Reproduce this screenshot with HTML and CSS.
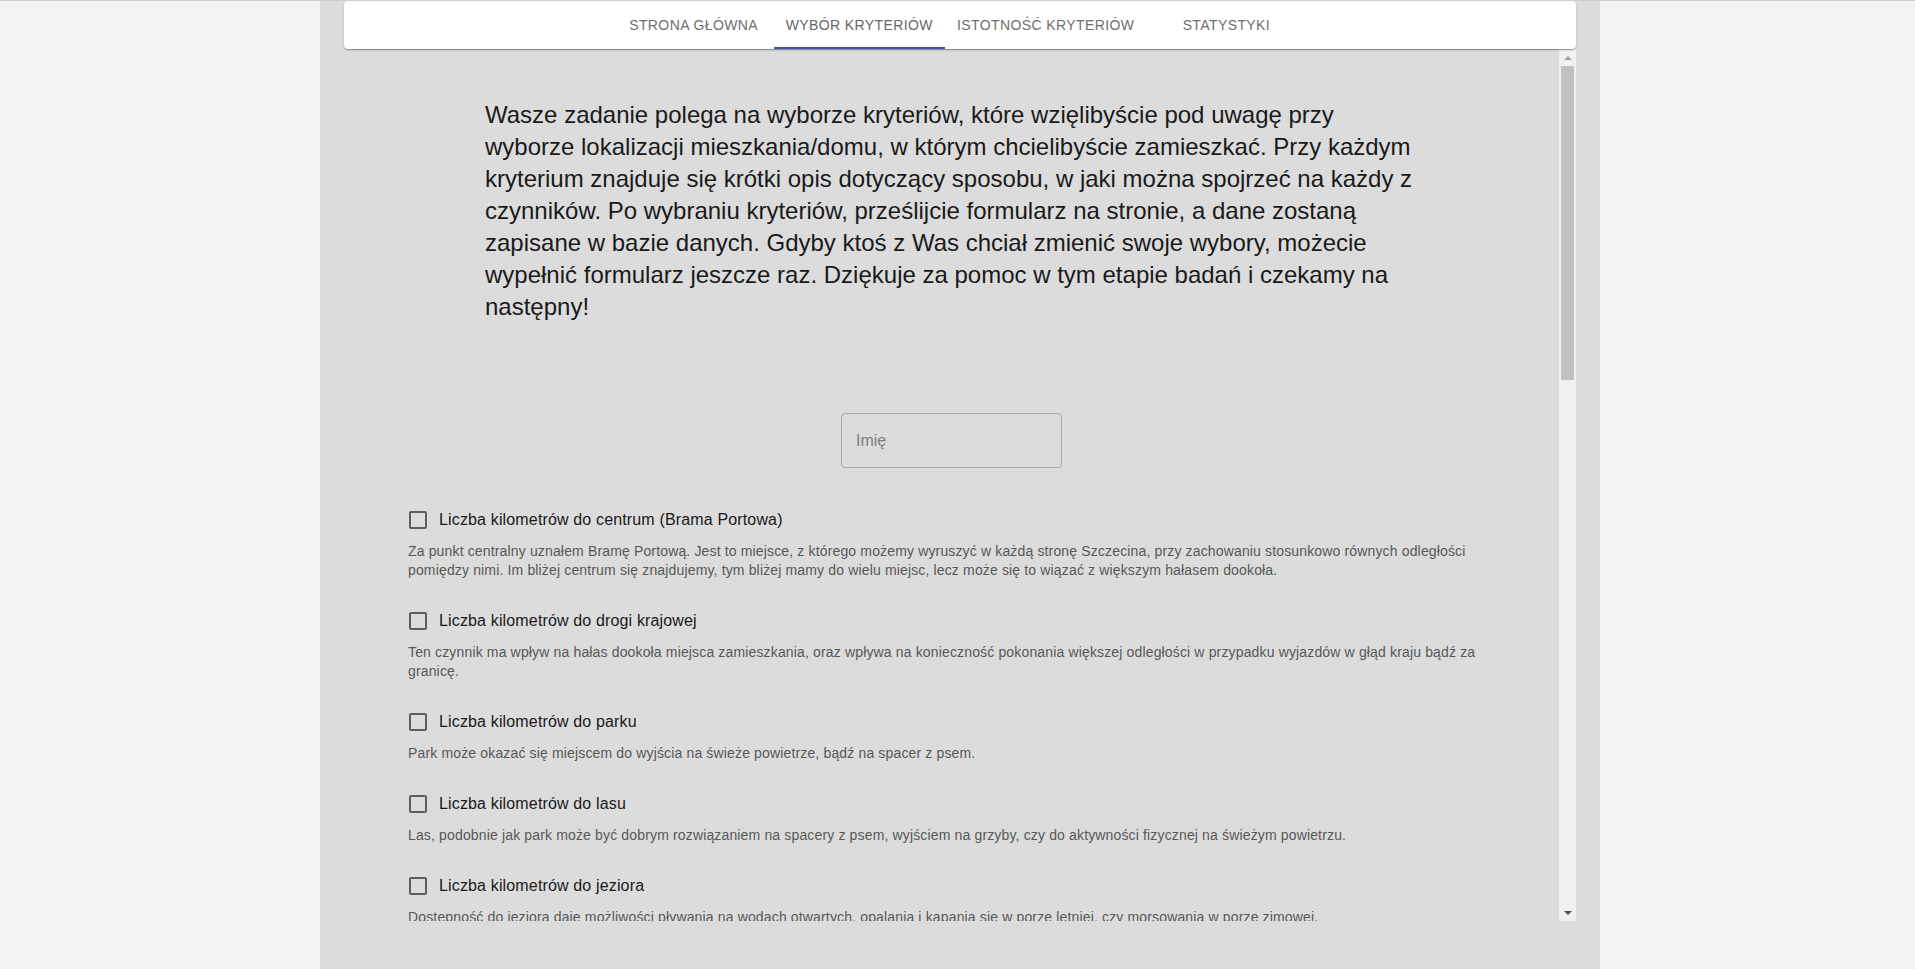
FILE: index.html
```html
<!DOCTYPE html>
<html lang="pl">
<head>
<meta charset="utf-8">
<title>Wybór kryteriów</title>
<link rel="stylesheet" href="styles.css">
</head>
<body>
<div class="page">
  <header class="appbar">
    <nav class="tabs">
      <a class="tab">Strona główna</a>
      <a class="tab tab-active">Wybór kryteriów</a>
      <a class="tab">Istotność kryteriów</a>
      <a class="tab">Statystyki</a>
    </nav>
  </header>
  <div class="viewport">
    <main class="scroller">
      <div class="content">
        <p class="intro">Wasze zadanie polega na wyborze kryteriów, które wzięlibyście pod uwagę przy wyborze lokalizacji mieszkania/domu, w którym chcielibyście zamieszkać. Przy każdym kryterium znajduje się krótki opis dotyczący sposobu, w jaki można spojrzeć na każdy z czynników. Po wybraniu kryteriów, prześlijcie formularz na stronie, a dane zostaną zapisane w bazie danych. Gdyby ktoś z Was chciał zmienić swoje wybory, możecie wypełnić formularz jeszcze raz. Dziękuje za pomoc w tym etapie badań i czekamy na następny!</p>
        <div class="name-field">
          <input class="name-input" type="text" placeholder="Imię">
        </div>
        <div class="criteria">
          <div class="criterion">
            <label class="check-row">
              <span class="check-btn"><svg class="check-icon" viewBox="0 0 24 24"><path d="M19 5v14H5V5h14m0-2H5c-1.11 0-2 .9-2 2v14c0 1.1.89 2 2 2h14c1.1 0 2-.9 2-2V5c0-1.1-.9-2-2-2z"/></svg></span>
              <span class="check-label">Liczba kilometrów do centrum (Brama Portowa)</span>
            </label>
            <p class="criterion-desc">Za punkt centralny uznałem Bramę Portową. Jest to miejsce, z którego możemy wyruszyć w każdą stronę Szczecina, przy zachowaniu stosunkowo równych odległości pomiędzy nimi. Im bliżej centrum się znajdujemy, tym bliżej mamy do wielu miejsc, lecz może się to wiązać z większym hałasem dookoła.</p>
          </div>
          <div class="criterion">
            <label class="check-row">
              <span class="check-btn"><svg class="check-icon" viewBox="0 0 24 24"><path d="M19 5v14H5V5h14m0-2H5c-1.11 0-2 .9-2 2v14c0 1.1.89 2 2 2h14c1.1 0 2-.9 2-2V5c0-1.1-.9-2-2-2z"/></svg></span>
              <span class="check-label">Liczba kilometrów do drogi krajowej</span>
            </label>
            <p class="criterion-desc">Ten czynnik ma wpływ na hałas dookoła miejsca zamieszkania, oraz wpływa na konieczność pokonania większej odległości w przypadku wyjazdów w głąd kraju bądź za granicę.</p>
          </div>
          <div class="criterion">
            <label class="check-row">
              <span class="check-btn"><svg class="check-icon" viewBox="0 0 24 24"><path d="M19 5v14H5V5h14m0-2H5c-1.11 0-2 .9-2 2v14c0 1.1.89 2 2 2h14c1.1 0 2-.9 2-2V5c0-1.1-.9-2-2-2z"/></svg></span>
              <span class="check-label">Liczba kilometrów do parku</span>
            </label>
            <p class="criterion-desc">Park może okazać się miejscem do wyjścia na świeże powietrze, bądź na spacer z psem.</p>
          </div>
          <div class="criterion">
            <label class="check-row">
              <span class="check-btn"><svg class="check-icon" viewBox="0 0 24 24"><path d="M19 5v14H5V5h14m0-2H5c-1.11 0-2 .9-2 2v14c0 1.1.89 2 2 2h14c1.1 0 2-.9 2-2V5c0-1.1-.9-2-2-2z"/></svg></span>
              <span class="check-label">Liczba kilometrów do lasu</span>
            </label>
            <p class="criterion-desc">Las, podobnie jak park może być dobrym rozwiązaniem na spacery z psem, wyjściem na grzyby, czy do aktywności fizycznej na świeżym powietrzu.</p>
          </div>
          <div class="criterion">
            <label class="check-row">
              <span class="check-btn"><svg class="check-icon" viewBox="0 0 24 24"><path d="M19 5v14H5V5h14m0-2H5c-1.11 0-2 .9-2 2v14c0 1.1.89 2 2 2h14c1.1 0 2-.9 2-2V5c0-1.1-.9-2-2-2z"/></svg></span>
              <span class="check-label">Liczba kilometrów do jeziora</span>
            </label>
            <p class="criterion-desc">Dostępność do jeziora daje możliwości pływania na wodach otwartych, opalania i kąpania się w porze letniej, czy morsowania w porze zimowej.</p>
          </div>
        </div>
      </div>
    </main>
    <div class="scrollbar" aria-hidden="true">
      <span class="sb-btn sb-up"></span>
      <span class="sb-track"><span class="sb-thumb"></span></span>
      <span class="sb-btn sb-down"></span>
    </div>
  </div>
</div>
</body>
</html>
```
FILE: styles.css
```css
html, body {
  margin: 0;
  height: 100%;
  overflow: hidden;
}
body {
  background: #f2f2f2;
  border-top: 1px solid #cfcfcf;
  box-sizing: border-box;
  font-family: "Liberation Sans", Arial, sans-serif;
}
.page {
  width: 1280px;
  height: 100%;
  margin-left: 320px;
  padding: 0 24px;
  box-sizing: border-box;
  background: #dcdcdc;
  display: flex;
  flex-direction: column;
}
.appbar {
  flex: none;
  height: 48px;
  background: #fff;
  border-radius: 4px;
  box-shadow: 0 2px 1px -1px rgba(0,0,0,0.2), 0 1px 1px 0 rgba(0,0,0,0.14), 0 1px 3px 0 rgba(0,0,0,0.12);
  display: flex;
  justify-content: center;
  position: relative;
  z-index: 1;
}
.tabs {
  display: flex;
}
.tab {
  position: relative;
  min-width: 160px;
  height: 48px;
  padding: 0 12px;
  box-sizing: border-box;
  display: flex;
  align-items: center;
  justify-content: center;
  font-size: 14px;
  letter-spacing: 0.4px;
  text-transform: uppercase;
  color: #6e6e6e;
  cursor: pointer;
}
.tab-active {
  color: #666;
}
.tab-active::after {
  content: "";
  position: absolute;
  left: 0;
  right: 0;
  bottom: 0;
  height: 2px;
  background: #3f51b5;
}
.viewport {
  flex: none;
  height: 90vh;
  display: flex;
}
.scroller {
  flex: 1;
  min-width: 0;
  overflow: hidden;
}
.scrollbar {
  flex: none;
  width: 17px;
  background: #f1f1f1;
  display: flex;
  flex-direction: column;
}
.sb-btn {
  flex: none;
  height: 17px;
  display: flex;
  align-items: center;
  justify-content: center;
}
.sb-up::before {
  content: "";
  border-left: 4px solid transparent;
  border-right: 4px solid transparent;
  border-bottom: 4px solid #a3a3a3;
}
.sb-down::before {
  content: "";
  border-left: 4px solid transparent;
  border-right: 4px solid transparent;
  border-top: 4px solid #505050;
}
.sb-track {
  flex: 1;
  padding: 0 2px;
}
.sb-thumb {
  display: block;
  height: 314px;
  background: #c1c1c1;
}
.content {
  padding-top: 50px;
  display: flex;
  flex-direction: column;
  align-items: center;
}
.intro {
  width: 933px;
  margin: 0;
  font-size: 24px;
  line-height: 32px;
  color: #1a1a1a;
}
.name-field {
  margin-top: 90px;
}
.name-input {
  width: 221px;
  height: 55px;
  box-sizing: border-box;
  padding: 0 14px;
  border: 1px solid #a9a9a9;
  border-radius: 4px;
  background: transparent;
  font-family: "Liberation Sans", Arial, sans-serif;
  font-size: 16px;
  color: #1a1a1a;
  outline: none;
}
.name-input::placeholder {
  color: #7c7c7c;
}
.criteria {
  width: 1087px;
  margin-top: 31px;
}
.criterion {
  margin-bottom: 20px;
}
.check-row {
  display: flex;
  align-items: center;
  height: 42px;
  margin-left: -11px;
  cursor: pointer;
}
.check-btn {
  padding: 9px;
  display: flex;
}
.check-icon {
  width: 24px;
  height: 24px;
  fill: #5e5e5e;
}
.check-label {
  font-size: 16px;
  letter-spacing: 0.15px;
  color: #1a1a1a;
}
.criterion-desc {
  margin: 1px 0 0;
  font-size: 14px;
  line-height: 19px;
  letter-spacing: 0.15px;
  color: #585858;
}
```
